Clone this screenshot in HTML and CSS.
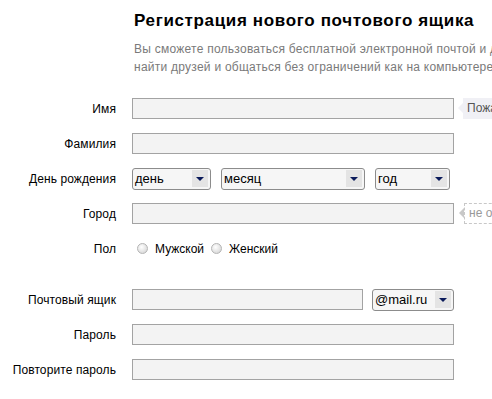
FILE: index.html
```html
<!DOCTYPE html>
<html lang="ru">
<head>
    <meta charset="UTF-8">
    <meta name="viewport" content="width=device-width, initial-scale=1.0">
    <title>Регистрация нового почтового ящика</title>
    <link rel="stylesheet" href="styles.css">
</head>
<body>

<div class="reg-page">
    <div class="reg-head">
        <h1>Регистрация нового почтового ящика</h1>
        <p class="intro">Вы сможете пользоваться бесплатной электронной почтой и другими сервисами Mail.Ru,<br>найти друзей и общаться без ограничений как на компьютере, так и на мобильном телефоне.</p>
    </div>

    <form class="reg-form">
        <div class="row">
            <label class="label">Имя</label>
            <input class="field" type="text">
            <div class="hint">Пожалуйста, укажите ваше настоящее имя</div>
        </div>

        <div class="row">
            <label class="label">Фамилия</label>
            <input class="field" type="text">
        </div>

        <div class="row">
            <label class="label">День рождения</label>
            <div class="dates">
                <div class="select select-day"><span>день</span><i class="arrow"></i></div>
                <div class="select select-month"><span>месяц</span><i class="arrow"></i></div>
                <div class="select select-year"><span>год</span><i class="arrow"></i></div>
            </div>
        </div>

        <div class="row">
            <label class="label">Город</label>
            <input class="field" type="text">
            <div class="hint hint-dashed">не обязательно</div>
        </div>

        <div class="row row-sex">
            <label class="label">Пол</label>
            <div class="radios">
                <span class="radio"></span><span class="radio-text">Мужской</span>
                <span class="radio"></span><span class="radio-text">Женский</span>
            </div>
        </div>

        <div class="row">
            <label class="label">Почтовый ящик</label>
            <input class="field field-mail" type="text">
            <div class="select select-domain"><span>@mail.ru</span><i class="arrow"></i></div>
        </div>

        <div class="row">
            <label class="label">Пароль</label>
            <input class="field" type="password">
        </div>

        <div class="row">
            <label class="label">Повторите пароль</label>
            <input class="field" type="password">
        </div>
    </form>
</div>

</body>
</html>
```

FILE: styles.css
```css
body {
    font-family: "Liberation Sans", Arial, sans-serif;
    font-size: 12px;
    color: #000;
    background-color: #fff;
    margin: 0;
    padding: 0;
    overflow: hidden;
}

.reg-page {
    width: 900px;
}

.reg-head {
    padding: 11px 0 0 134px;
}

h1 {
    margin: 0;
    font-size: 17px;
    font-weight: bold;
    line-height: 20px;
    letter-spacing: 0.65px;
}

.intro {
    margin: 9px 0 0;
    color: #7a7a7a;
    line-height: 18px;
    letter-spacing: 0.25px;
    white-space: nowrap;
}

.reg-form {
    margin-top: 22px;
}

.row {
    display: flex;
    align-items: center;
    height: 21px;
    margin-bottom: 14px;
}

.row-sex {
    margin-bottom: 30px;
}

.label {
    width: 116px;
    margin-right: 16px;
    text-align: right;
    letter-spacing: 0.1px;
    flex-shrink: 0;
}

.field {
    box-sizing: border-box;
    width: 322px;
    height: 21px;
    margin: 0;
    padding: 2px 3px;
    background-color: #f3f3f3;
    border: 1px solid #a3a3a3;
    font: inherit;
}

.field-mail {
    width: 231px;
    margin-right: 9px;
}

.hint {
    position: relative;
    margin-left: 9px;
    padding: 0 4px;
    height: 21px;
    line-height: 21px;
    background-color: #f0f0f5;
    color: #555;
    white-space: nowrap;
}

.hint::before {
    content: "";
    position: absolute;
    left: -5px;
    top: 5px;
    border-top: 5px solid transparent;
    border-bottom: 5px solid transparent;
    border-right: 5px solid #f0f0f5;
}

.hint-dashed {
    background-color: #fff;
    border: 1px dashed #c8c8c8;
    height: 19px;
    line-height: 19px;
    color: #999;
    margin-left: 10px;
}

.hint-dashed::before {
    left: -6px;
    top: 4px;
    border-right-color: #c8c8c8;
}

.dates {
    display: flex;
    gap: 10px;
}

.select {
    box-sizing: border-box;
    display: flex;
    align-items: center;
    justify-content: space-between;
    height: 22px;
    padding: 0 2px 0 2px;
    border: 1px solid #8c8c8c;
    border-radius: 3px;
    background-color: #f6f6f6;
    font-size: 13px;
}

.select-day {
    width: 79px;
}

.select-month {
    width: 144px;
}

.select-year {
    width: 75px;
}

.select-domain {
    width: 82px;
}

.arrow {
    position: relative;
    width: 16px;
    height: 17px;
    background-color: #e4e4e4;
}

.arrow::after {
    content: "";
    position: absolute;
    left: 4px;
    top: 7px;
    border-left: 4px solid transparent;
    border-right: 4px solid transparent;
    border-top: 4px solid #0a1a5a;
}

.radios {
    display: flex;
    align-items: center;
    padding-left: 5px;
}

.radio {
    box-sizing: border-box;
    width: 11px;
    height: 11px;
    border-radius: 50%;
    border: 1px solid #b4b4b4;
    background: radial-gradient(circle at 40% 35%, #fff 0%, #e2e2e2 60%, #cfcfcf 100%);
    margin-right: 7px;
}

.radio-text {
    margin-right: 7px;
}
```
